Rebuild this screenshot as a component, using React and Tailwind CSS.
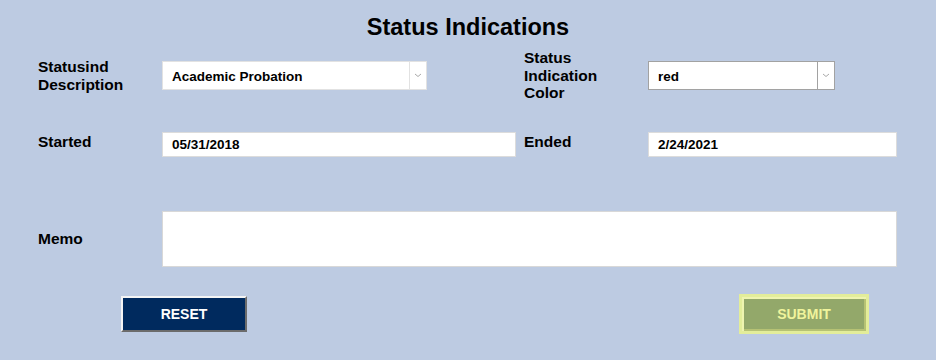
import React from 'react';

function Chevron() {
  return (
    <svg width="8" height="5" viewBox="0 0 8 5" className="block">
      <path d="M1 1 L4 3.5 L7 1" fill="none" stroke="#a9a9a9" strokeWidth="1" />
    </svg>
  );
}

function SelectBox({ value, width, borderClass }) {
  return (
    <div className={`flex h-[29px] bg-white border ${borderClass} ${width}`}>
      <div className="flex-1 flex items-center pl-[9px] pt-[4px] text-[13.5px] font-bold text-black">{value}</div>
      <div className={`w-[17px] flex items-center justify-center border-l ${borderClass}`}>
        <Chevron />
      </div>
    </div>
  );
}

function TextBox({ value, width }) {
  return (
    <div className={`h-[25px] bg-white border border-[#dcdcdc] flex items-center pl-[9px] pt-[2px] text-[13.5px] font-bold text-black ${width}`}>
      {value}
    </div>
  );
}

function Label({ children }) {
  return <div className="text-[15.5px] leading-[17.7px] font-bold text-black">{children}</div>;
}

export default function App() {
  return (
    <div className="w-[936px] h-[360px] bg-[#bdcbe2] font-['Liberation_Sans',Arial,sans-serif] overflow-hidden">
      <h1 className="pt-[13px] text-center text-[23.5px] leading-[28px] font-bold text-black">
        Status Indications
      </h1>

      {/* description + color */}
      <div className="mt-[8px] px-[38px] grid grid-cols-[124px_362px_124px_249px] items-center">
        <Label>
          Statusind
          <br />
          Description
        </Label>
        <SelectBox value="Academic Probation" width="w-[265px]" borderClass="border-[#e2e2e2]" />
        <Label>
          Status
          <br />
          Indication
          <br />
          Color
        </Label>
        <SelectBox value="red" width="w-[187px]" borderClass="border-[#a2a2a2]" />
      </div>

      {/* dates */}
      <div className="mt-[30px] px-[38px] grid grid-cols-[124px_362px_124px_249px] items-start">
        <div className="pt-[1px]">
          <Label>Started</Label>
        </div>
        <TextBox value="05/31/2018" width="w-[354px]" />
        <div className="pt-[1px]">
          <Label>Ended</Label>
        </div>
        <TextBox value="2/24/2021" width="w-[249px]" />
      </div>

      {/* memo */}
      <div className="mt-[54px] px-[38px] grid grid-cols-[124px_735px] items-center">
        <Label>Memo</Label>
        <div className="h-[56px] bg-white border border-[#d8d8d8]" />
      </div>

      {/* actions */}
      <div className="mt-[27px] pl-[121px] pr-[67px] flex items-center justify-between">
        <button className="w-[126px] h-[36px] bg-[#002a5e] border-2 border-t-[#f4f4f4] border-l-[#f4f4f4] border-r-[#6b6b6b] border-b-[#6b6b6b] text-white text-[14px] font-bold">
          RESET
        </button>
        <button className="w-[130px] h-[40px] bg-[#93a86a] border-[3px] border-[#e3ed9a] shadow-[inset_2px_2px_0_#eef4b0,inset_-2px_-2px_0_#b6c274] text-[#f0f49c] text-[14px] font-bold">
          SUBMIT
        </button>
      </div>
    </div>
  );
}
